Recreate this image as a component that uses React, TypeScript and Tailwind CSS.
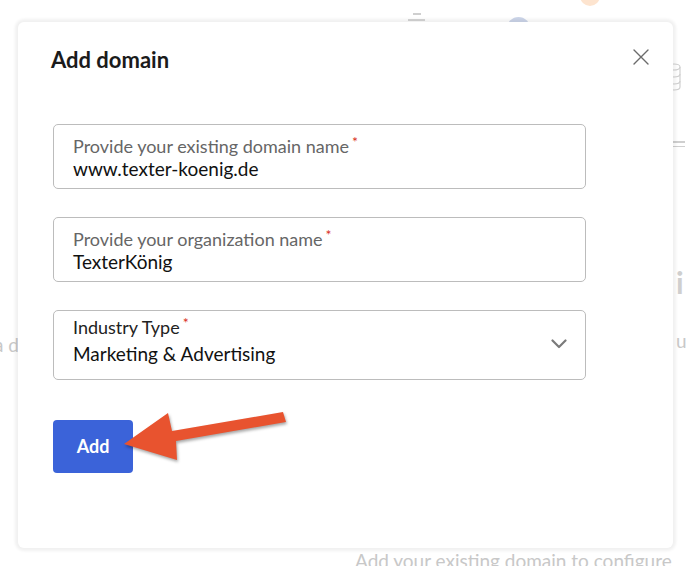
import React from "react";

const Asterisk = () => (
  <span className="text-[#d93025] text-[14px] align-top ml-[3px] leading-none">*</span>
);

const Field = ({ label, value, className }: { label: string; value: string; className?: string }) => (
  <div className={"border border-[#bcbcbc] rounded-[5px] px-[19px] pt-[10px] h-[65px] " + (className || "")}>
    <div className="text-[18px] leading-[22px] text-[#666]">
      {label}
      <Asterisk />
    </div>
    <div className="text-[19px] leading-[24px] text-[#111]">{value}</div>
  </div>
);

const App = () => {
  return (
    <div
      className="relative w-[688px] h-[566px] overflow-hidden bg-white"
      style={{ fontFamily: "Lato, 'Open Sans', sans-serif" }}
    >
      {/* faded page behind the dialog */}
      <div className="absolute left-[580px] top-[-14px] w-[20px] h-[20px] rounded-full bg-[#fde4cf]" />
      <div className="absolute left-[408px] top-[13px] flex flex-col items-center gap-[4px]">
        <div className="w-[8px] h-[2px] bg-[#cfcfcf]" />
        <div className="w-[17px] h-[2px] bg-[#d6d6d6]" />
      </div>
      <div className="absolute left-[507px] top-[17px] w-[23px] h-[23px] rounded-full bg-[#cdd6ea]" />
      <svg className="absolute left-[666px] top-[62px]" width="16" height="32" viewBox="0 0 16 32" fill="none" stroke="#d0d0d0" strokeWidth="1.2">
        <ellipse cx="8" cy="5" rx="6" ry="3" />
        <path d="M2 5v20c0 2 3 3 6 3s6-1 6-3V5" />
        <path d="M2 12c0 2 3 3 6 3s6-1 6-3M2 19c0 2 3 3 6 3s6-1 6-3" />
      </svg>
      <div className="absolute left-[673px] top-[141px] flex flex-col gap-[3px]">
        <div className="w-[12px] h-[1.5px] bg-[#cfcfcf]" />
        <div className="w-[12px] h-[1.5px] bg-[#cfcfcf]" />
      </div>
      <div className="absolute left-[676px] top-[262px] text-[30px] font-bold leading-[40px] text-[#cfcfcf]">i</div>
      <div className="absolute left-[676px] top-[329px] text-[19px] leading-[24px] text-[#c8c8c8]">u</div>
      <div className="absolute left-[-6px] top-[333px] text-[19px] leading-[24px] text-[#c8c8c8]">a d</div>
      <div className="absolute left-[355px] top-[549px] text-[19px] leading-[24px] text-[#c8c8c8] whitespace-nowrap">
        Add your existing domain to configure
      </div>

      {/* dialog */}
      <div className="relative z-10 ml-[18px] mt-[22px] w-[655px] h-[526px] bg-white rounded-[6px] shadow-[0_0_3px_3px_rgba(0,0,0,0.06)] pt-[24px]">
        <div className="flex items-start justify-between pl-[33px] pr-[24px]">
          <h2 className="text-[22px] leading-[28px] font-bold text-[#1b1b1b]">Add domain</h2>
          <svg className="mt-[3px]" width="16" height="16" viewBox="0 0 16 16" stroke="#6b6b6b" strokeWidth="1.4" strokeLinecap="round">
            <path d="M1 1l14 14M15 1L1 15" />
          </svg>
        </div>

        <div className="px-[35px] mt-[50px] w-[603px] flex flex-col">
          <Field label="Provide your existing domain name" value="www.texter-koenig.de" />
          <Field label="Provide your organization name" value="TexterKönig" className="mt-[28px]" />

          <div className="mt-[28px] h-[70px] border border-[#bcbcbc] rounded-[5px] pl-[19px] pr-[18px] pt-[5px] flex items-start justify-between">
            <div>
              <div className="text-[18px] leading-[22px] text-[#222]">
                Industry Type
                <Asterisk />
              </div>
              <div className="mt-[4px] text-[19px] leading-[24px] text-[#111]">Marketing &amp; Advertising</div>
            </div>
            <svg className="mt-[23px]" width="16" height="10" viewBox="0 0 16 10" fill="none" stroke="#7a7a7a" strokeWidth="2.2" strokeLinecap="round" strokeLinejoin="round">
              <path d="M1.5 1.5L8 8l6.5-6.5" />
            </svg>
          </div>

          <button className="mt-[40px] w-[80px] h-[53px] rounded-[4px] bg-[#3b63d9] text-white text-[18px] font-bold">
            Add
          </button>
        </div>
      </div>

      {/* annotation arrow */}
      <svg className="absolute left-0 top-0 z-20 pointer-events-none drop-shadow-[1px_2px_1.5px_rgba(0,0,0,0.35)]" width="688" height="566">
        <polygon points="124,444 168,413 172,431 283,412 286,422 176,441 177,460" fill="#e8532f" />
      </svg>
    </div>
  );
};

export default App;
